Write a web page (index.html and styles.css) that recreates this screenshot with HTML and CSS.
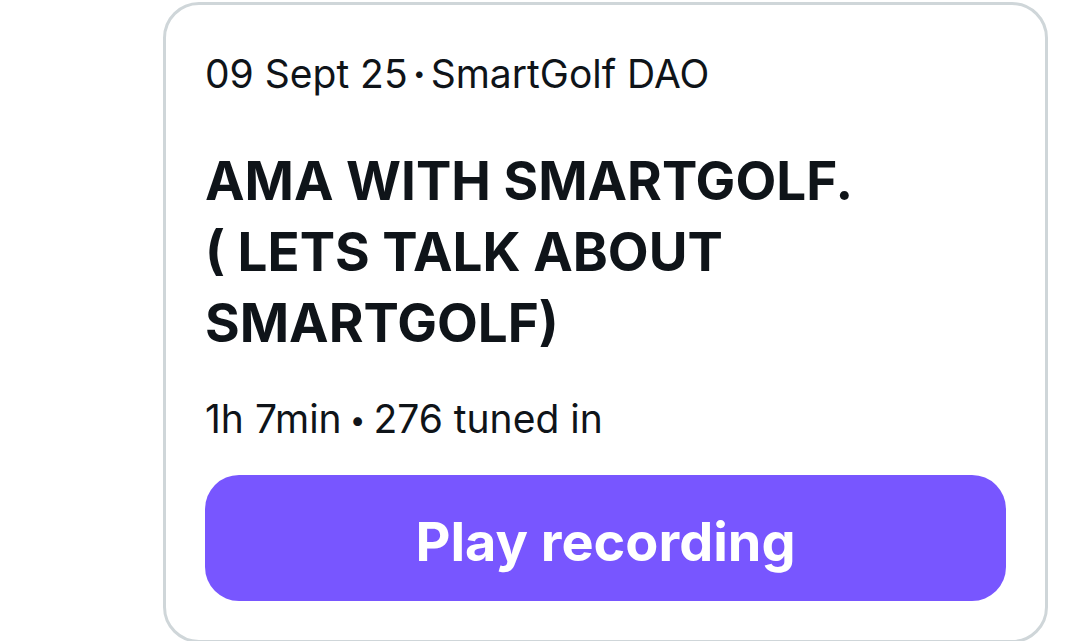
FILE: index.html
```html
<!DOCTYPE html>
<html lang="en">

<head>
    <meta charset="utf-8" />
    <meta name="viewport" content="width=device-width, initial-scale=1">
    <title>AMA WITH SMARTGOLF</title>
    <link rel="stylesheet" href="styles.css">
</head>

<body>
    <article class="card">
        <p class="meta">09 Sept 25<span class="dot">·</span>SmartGolf DAO</p>
        <h1 class="title">AMA WITH SMARTGOLF.<br>( LETS TALK ABOUT SMARTGOLF)</h1>
        <p class="stats">1h 7min<span class="bullet">•</span>276 tuned in</p>
        <button class="play" type="button">Play recording</button>
    </article>
</body>

</html>
```

FILE: styles.css
```css
* {
    box-sizing: border-box;
}

body {
    margin: 0;
    padding: 2px 32px 0 163px;
    background: #fff;
    color: #0f1419;
    font-family: Inter, "Liberation Sans", sans-serif;
    overflow: hidden;
}

.card {
    padding: 41px 39px 39px;
    border: 3px solid #cfd6d9;
    border-radius: 36px;
}

.meta,
.title,
.stats {
    margin: 0;
}

.meta,
.stats {
    font-size: 39px;
    line-height: 56px;
}

.dot {
    margin: 0 5px;
    font-weight: 700;
}

.bullet {
    margin: 0 8px;
    font-size: 28px;
    line-height: 1;
    vertical-align: 3px;
}

.title {
    max-width: 680px;
    margin: 44px 0 32px;
    font-size: 53px;
    line-height: 71px;
    font-weight: 700;
}

.play {
    display: block;
    width: 100%;
    height: 126px;
    margin-top: 28px;
    padding: 6px 0 0;
    border: 0;
    border-radius: 34px;
    background: #7856ff;
    color: #fff;
    font: inherit;
    font-size: 54px;
    font-weight: 700;
    cursor: pointer;
}
```
